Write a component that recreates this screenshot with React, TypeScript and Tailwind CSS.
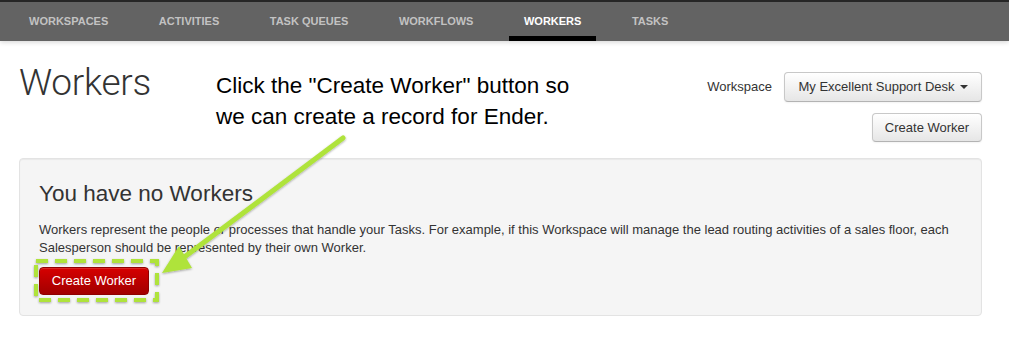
import React from "react";

const navItems = ["WORKSPACES", "ACTIVITIES", "TASK QUEUES", "WORKFLOWS", "WORKERS", "TASKS"];

export default function App() {
  return (
    <div
      className="relative w-[1009px] h-[358px] bg-white overflow-hidden text-[#333]"
      style={{ fontFamily: '"Liberation Sans", Arial, sans-serif' }}
    >
      {/* Nav */}
      <div className="h-[41px] bg-[#636363] border-t-2 border-[#262626] flex items-stretch pl-[14px] gap-[20.5px] shadow-[0_1px_5px_rgba(0,0,0,0.18)]">
        {navItems.map((n) => (
          <div
            key={n}
            className={`relative px-[15px] flex items-center text-[11px] font-bold ${
              n === "WORKERS" ? "text-white" : "text-[#c2c2c2]"
            }`}
          >
            {n}
            {n === "WORKERS" && <div className="absolute left-0 right-0 bottom-0 h-[5px] bg-black" />}
          </div>
        ))}
      </div>

      {/* Content */}
      <div className="pl-[19px] pr-[27px]">
        <div className="flex items-start justify-between">
          <h1
            className="mt-[22px] text-[37px] leading-[40px] font-light tracking-[-0.3px] text-[#333]"
            style={{ fontFamily: 'Roboto, "Liberation Sans", sans-serif' }}
          >
            Workers
          </h1>
          <div className="mt-[31px] flex flex-col items-end gap-[11px]">
            <div className="flex items-center">
              <span className="text-[13px] mr-[12px]">Workspace</span>
              <button className="h-[30px] w-[198px] flex items-center justify-center gap-[5px] rounded-[4px] border border-[#c8c8c8] border-b-[#b3b3b3] bg-gradient-to-b from-white to-[#e6e6e6] text-[13px] text-[#333] shadow-[inset_0_1px_0_rgba(255,255,255,0.2),0_1px_2px_rgba(0,0,0,0.05)]">
                My Excellent Support Desk
                <span className="inline-block w-0 h-0 border-x-[4px] border-t-[4px] border-x-transparent border-t-[#333]" />
              </button>
            </div>
            <button className="h-[29px] w-[110px] rounded-[4px] border border-[#c8c8c8] border-b-[#b3b3b3] bg-gradient-to-b from-white to-[#e6e6e6] text-[13px] text-[#333] shadow-[0_1px_2px_rgba(0,0,0,0.05)]">
              Create Worker
            </button>
          </div>
        </div>

        <div className="mt-[16px] h-[158px] rounded-[4px] border border-[#e3e3e3] bg-[#f5f5f5] px-[19px] pt-[20px] shadow-[inset_0_1px_1px_rgba(0,0,0,0.05)]">
          <h3 className="text-[22.5px] leading-[30px] text-[#333]">You have no Workers</h3>
          <p className="mt-[12px] text-[13px] leading-[18px] text-[#333]">
            Workers represent the people or processes that handle your Tasks. For example, if this Workspace will manage
            the lead routing activities of a sales floor, each Salesperson should be represented by their own Worker.
          </p>
          <button className="mt-[10px] h-[28px] w-[110px] rounded-[4px] border border-[#8f0000] bg-gradient-to-b from-[#d60000] to-[#a20000] text-[13px] text-white shadow-[inset_0_1px_0_rgba(255,255,255,0.15)]">
            Create Worker
          </button>
        </div>
      </div>

      {/* Annotation text */}
      <div className="absolute left-[216px] top-[70px] text-[22.5px] leading-[31px] text-black">
        <div>Click the "Create Worker" button so</div>
        <div>we can create a record for Ender.</div>
      </div>

      {/* Arrow + dashed box */}
      <svg className="absolute left-0 top-0 pointer-events-none" width="1009" height="358" viewBox="0 0 1009 358">
        <defs>
          <filter id="sh" x="-20%" y="-20%" width="140%" height="140%">
            <feDropShadow dx="0" dy="1" stdDeviation="1.2" floodColor="#000" floodOpacity="0.35" />
          </filter>
        </defs>
        <g filter="url(#sh)">
          <rect
            x="36"
            y="261"
            width="121"
            height="39"
            fill="none"
            stroke="#afe33a"
            strokeWidth="4"
            strokeDasharray="12 7"
          />
          <line x1="343" y1="138" x2="183" y2="258" stroke="#afe33a" strokeWidth="5" strokeLinecap="round" />
          <polygon points="162,273 179,246 192,268" fill="#afe33a" />
        </g>
      </svg>
    </div>
  );
}
